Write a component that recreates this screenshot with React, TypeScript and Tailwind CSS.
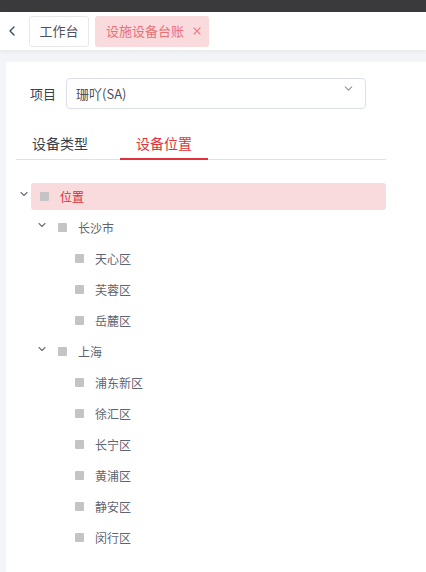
import { ChevronDown, ChevronLeft, X } from "lucide-react";

type Node = { label: string; level: number; open?: boolean; active?: boolean };

const nodes: Node[] = [
  { label: "位置", level: 0, open: true, active: true },
  { label: "长沙市", level: 1, open: true },
  { label: "天心区", level: 2 },
  { label: "芙蓉区", level: 2 },
  { label: "岳麓区", level: 2 },
  { label: "上海", level: 1, open: true },
  { label: "浦东新区", level: 2 },
  { label: "徐汇区", level: 2 },
  { label: "长宁区", level: 2 },
  { label: "黄浦区", level: 2 },
  { label: "静安区", level: 2 },
  { label: "闵行区", level: 2 },
];

const indent = ["pl-0", "pl-[18px]", "pl-[35px]"];

function TreeRow({ node }: { node: Node }) {
  return (
    <div className={`flex items-center h-[27px] mb-[4px] ${indent[node.level]}`}>
      <span className="w-[15px] flex items-center justify-center">
        {node.open && <ChevronDown size={12} strokeWidth={2.2} className="text-[#6b7080] -mt-[5px]" />}
      </span>
      <div
        className={`flex-1 h-full flex items-center pl-[9px] rounded-[3px] ${
          node.active ? "bg-[#fadbdd]" : ""
        }`}
      >
        <span className="w-[9px] h-[9px] bg-[#c4c4c4] rounded-[1px]" />
        <span
          className={`ml-[11px] text-[12px] leading-none ${
            node.active ? "text-[#e02f36]" : "text-[#5f6472]"
          }`}
        >
          {node.label}
        </span>
      </div>
    </div>
  );
}

export default function App() {
  return (
    <div
      className="w-[426px] h-[572px] bg-[#f3f4f7] flex flex-col overflow-hidden"
      style={{ fontFamily: '"Noto Sans CJK SC", "Noto Sans", sans-serif' }}
    >
      <div className="h-[12px] bg-[#3a3a3c]" />
      <div className="h-[38px] bg-white flex items-center shadow-[0_2px_4px_rgba(0,0,0,0.05)] z-10">
        <div className="w-[24px] h-full flex items-center justify-center">
          <ChevronLeft size={16} strokeWidth={2} className="text-[#3b4a6b]" />
        </div>
        <div className="ml-[5px] h-[31px] w-[60px] border border-[#e6e8ec] rounded-[3px] flex items-center justify-center text-[13px] text-[#4a5060]">
          工作台
        </div>
        <div className="ml-[6px] h-[31px] w-[114px] bg-[#fadbdd] rounded-[3px] flex items-center pl-[11px] text-[13px] text-[#ea6f77]">
          设施设备台账
          <X size={12} strokeWidth={2.2} className="ml-[7px] text-[#ea7d84]" />
        </div>
      </div>
      <div className="flex-1 pl-[6px] pt-[12px] flex">
        <div className="flex-1 bg-white pt-[16px]">
          <div className="flex items-center pl-[24px]">
            <span className="text-[13px] text-[#3a3f4c] w-[36px]">项目</span>
            <div className="w-[300px] h-[31px] border border-[#dcdfe6] rounded-[4px] flex items-center pl-[9px] relative">
              <span className="text-[13px] text-[#4a4f5c]">珊吖(SA)</span>
              <ChevronDown size={13} strokeWidth={2} className="absolute right-[10px] top-[3px] text-[#8c93a6]" />
            </div>
          </div>
          <div className="ml-[10px] w-[370px] mt-[19px] border-b border-[#dfe1e6] flex h-[32px]">
            <div className="w-[104px] pl-[16px] text-[14px] text-[#3a3f4c] flex items-center">设备类型</div>
            <div className="w-[88px] flex items-center justify-center text-[14px] text-[#e0323a] border-b-2 border-[#e0323a] -mb-px">
              设备位置
            </div>
          </div>
          <div className="ml-[10px] w-[370px] mt-[23px]">
            {nodes.map((n) => (
              <TreeRow key={n.label} node={n} />
            ))}
          </div>
        </div>
      </div>
    </div>
  );
}
